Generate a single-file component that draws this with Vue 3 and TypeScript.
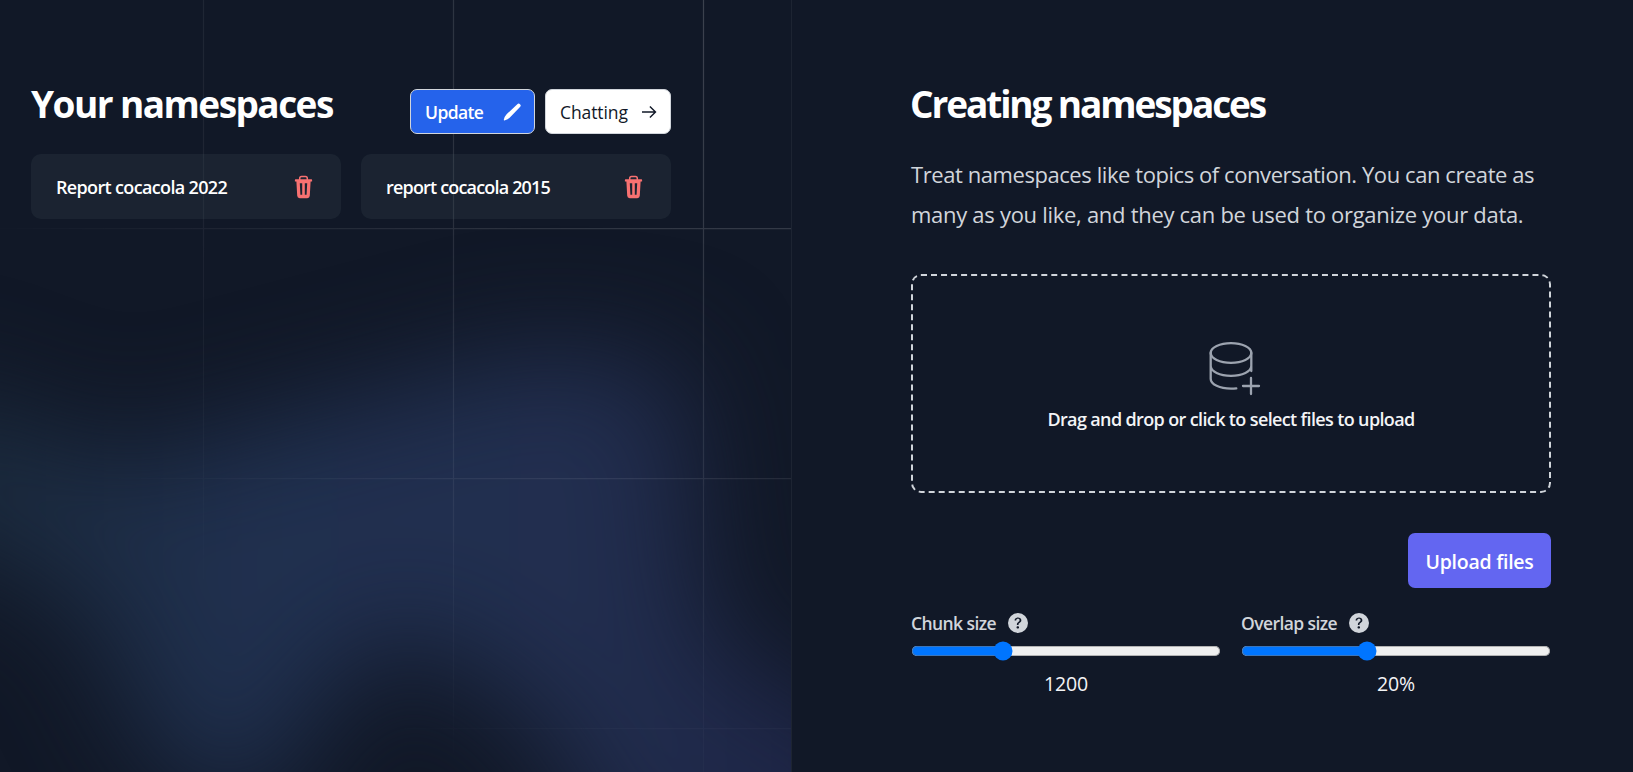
<script setup lang="ts">
import { ref } from 'vue'

interface Namespace {
  name: string
  tight: boolean
}

const namespaces = ref<Namespace[]>([
  { name: 'Report cocacola 2022', tight: false },
  { name: 'report cocacola 2015', tight: true },
])
const chunkSize = ref(1200)
const overlap = ref(20)
</script>

<template>
  <main class="page">
    <section class="left">
      <div class="backdrop">
        <svg class="glow" viewBox="0 0 791 772" preserveAspectRatio="none">
          <defs>
            <filter id="soft" x="-60%" y="-60%" width="220%" height="220%" color-interpolation-filters="sRGB">
              <feGaussianBlur stdDeviation="55" />
            </filter>
            <linearGradient id="tint" x1="0" y1="0" x2="1" y2="0">
              <stop offset="0" stop-color="#1a2a3a" />
              <stop offset="0.35" stop-color="#20304f" />
              <stop offset="0.7" stop-color="#222e4f" />
              <stop offset="1" stop-color="#1c2142" />
            </linearGradient>
          </defs>
          <path
            d="M-100 380 L120 460 L540 350 L680 370 L710 640 L900 740 L900 920 L620 880 L540 720 L400 630 L320 700 L250 820 L160 760 L80 600 L-100 520 Z"
            fill="url(#tint)" filter="url(#soft)" />
        </svg>
        <svg class="grid-lines" width="791" height="772" viewBox="0 0 791 772">
          <defs>
            <radialGradient id="fade" gradientUnits="userSpaceOnUse" cx="791" cy="0" r="850">
              <stop offset="0" stop-color="#fff" />
              <stop offset="1" stop-color="#fff" stop-opacity="0" />
            </radialGradient>
            <mask id="fadeMask"><rect width="791" height="772" fill="url(#fade)" /></mask>
          </defs>
          <path mask="url(#fadeMask)" d="M203.5 0V772M453.5 0V772M703.5 0V772M0 228.5H791M0 478.5H791M0 728.5H791"
            fill="none" stroke="#fff" stroke-opacity="0.2" stroke-width="1.25" />
        </svg>
      </div>
      <div class="left-content">
        <header class="left-head">
          <h2 class="title title-left">Your namespaces</h2>
          <div class="actions">
            <button class="btn btn-update" type="button">
              <span>Update</span>
              <svg width="20" height="20" viewBox="0 0 20 20" fill="currentColor">
                <path d="M18 2.200a1.900 1.900 0 0 0-2.700 0L4.600 12.300Q2.600 14.300 1.800 17.800q-.1.700.6.600Q6 17.500 7.900 15.500L18 5a1.900 1.900 0 0 0 0-2.800z" />
              </svg>
            </button>
            <button class="btn btn-chat" type="button">
              <span>Chatting</span>
              <svg width="16" height="16" viewBox="0 0 16 16" fill="none" stroke="currentColor" stroke-width="1.4">
                <path d="M1 8H14.3M8.9 2.4L14.5 8l-5.6 5.6" />
              </svg>
            </button>
          </div>
        </header>
        <ul class="cards">
          <li v-for="item in namespaces" :key="item.name" class="card" :class="{ tight: item.tight }">
            <span>{{ item.name }}</span>
            <svg width="24" height="24" viewBox="0 0 24 24" fill="none">
              <path d="M7.700 5V3.400Q7.700 1.400 9.500 1.400h4Q15.300 1.400 15.300 3.400V5" stroke="#f87171" stroke-width="1.5" />
              <path fill="#f87171" fill-rule="evenodd"
                d="M3.500 4.300h16a.6.6 0 0 1 .6.6v1.500h-1.500l-.8 14.400a2.600 2.600 0 0 1-2.500 2.400H7.700a2.600 2.600 0 0 1-2.500-2.400L4.400 6.400H2.900V4.900a.6.6 0 0 1 .6-.6zM7.800 8.300l.6 11.500h1.800V8.300zM12.800 8.300v11.500h1.800l.6-11.500z" />
            </svg>
          </li>
        </ul>
      </div>
    </section>

    <section class="right">
      <h2 class="title title-right">Creating namespaces</h2>
      <p class="intro">
        <span class="l1">Treat namespaces like topics of conversation. You can create as</span><br />
        <span class="l2">many as you like, and they can be used to organize your data.</span>
      </p>
      <div class="dropzone">
        <svg width="60" height="60" viewBox="0 0 60 60" fill="none" stroke="#9ca3af" stroke-width="2.3" stroke-linecap="round" stroke-linejoin="round">
          <ellipse cx="30" cy="17" rx="20.3" ry="9.8" />
          <path d="M9.700 17v26c0 5.400 9 9.600 20.300 9.600q3 0 5.300-.3M50.300 17v18M9.700 30c0 5.400 9 9.800 20.300 9.800s20.300-4.400 20.300-9.800M50 42v16M42 50h16" />
        </svg>
        <p>Drag and drop or click to select files to upload</p>
      </div>
      <div class="upload-row">
        <button class="upload" type="button">Upload files</button>
      </div>
      <div class="sliders">
        <div class="slider">
          <div class="label">
            <span>Chunk size</span>
            <svg width="20" height="20" viewBox="0 0 16 16" fill="#d1d5db">
              <path d="M16 8A8 8 0 1 1 0 8a8 8 0 0 1 16 0zM5.496 6.033h.825c.138 0 .248-.113.266-.25.09-.656.54-1.134 1.342-1.134.686 0 1.314.343 1.314 1.168 0 .635-.374.927-.965 1.371-.673.489-1.206 1.06-1.168 1.987l.003.217a.25.25 0 0 0 .25.246h.811a.25.25 0 0 0 .25-.25v-.105c0-.718.273-.927 1.01-1.486.609-.463 1.244-.977 1.244-2.056 0-1.511-1.276-2.241-2.673-2.241-1.267 0-2.655.59-2.75 2.286a.237.237 0 0 0 .241.247zm2.325 6.443c.61 0 1.029-.394 1.029-.927 0-.552-.42-.94-1.029-.94-.584 0-1.009.388-1.009.94 0 .533.425.927 1.01.927z" />
            </svg>
          </div>
          <input v-model.number="chunkSize" type="range" min="100" max="4000" step="100" />
          <div class="value">{{ chunkSize }}</div>
        </div>
        <div class="slider">
          <div class="label">
            <span>Overlap size</span>
            <svg width="20" height="20" viewBox="0 0 16 16" fill="#d1d5db">
              <path d="M16 8A8 8 0 1 1 0 8a8 8 0 0 1 16 0zM5.496 6.033h.825c.138 0 .248-.113.266-.25.09-.656.54-1.134 1.342-1.134.686 0 1.314.343 1.314 1.168 0 .635-.374.927-.965 1.371-.673.489-1.206 1.06-1.168 1.987l.003.217a.25.25 0 0 0 .25.246h.811a.25.25 0 0 0 .25-.25v-.105c0-.718.273-.927 1.01-1.486.609-.463 1.244-.977 1.244-2.056 0-1.511-1.276-2.241-2.673-2.241-1.267 0-2.655.59-2.75 2.286a.237.237 0 0 0 .241.247zm2.325 6.443c.61 0 1.029-.394 1.029-.927 0-.552-.42-.94-1.029-.94-.584 0-1.009.388-1.009.94 0 .533.425.927 1.01.927z" />
            </svg>
          </div>
          <input v-model.number="overlap" type="range" min="0" max="50" />
          <div class="value">{{ overlap }}%</div>
        </div>
      </div>
    </section>
  </main>
</template>

<style>
body {
  margin: 0;
  background: #111827;
}
</style>

<style scoped>
* {
  box-sizing: border-box;
}
.page {
  display: grid;
  grid-template-columns: 792px 1fr;
  height: 772px;
  overflow: hidden;
  background: #111827;
  color: #fff;
  font-family: 'Open Sans', 'Noto Sans', sans-serif;
}
h2,
p,
ul {
  margin: 0;
  padding: 0;
}
svg {
  display: block;
  flex: none;
}
button {
  font-family: inherit;
}
.left {
  position: relative;
  border-right: 1px solid #1d2432;
  overflow: hidden;
}
.backdrop,
.glow,
.grid-lines {
  position: absolute;
  inset: 0;
}
.glow {
  width: 100%;
  height: 100%;
}
.left-content {
  position: relative;
  padding: 79px 120px 0 31px;
}
.left-head {
  display: flex;
  justify-content: space-between;
  height: 75px;
}
.title {
  font-size: 37px;
  font-weight: 700;
  line-height: 50px;
  white-space: nowrap;
}
.title-left {
  letter-spacing: -1.55px;
}
.title-right {
  margin-left: -1px;
  letter-spacing: -2.1px;
}
.actions {
  display: flex;
  gap: 10px;
  padding-top: 10px;
}
.btn {
  display: flex;
  align-items: center;
  justify-content: space-between;
  height: 45px;
  padding: 0 14px;
  border: 1px solid #d1d5db;
  border-radius: 7px;
  font-size: 17.5px;
  white-space: nowrap;
}
.btn-update {
  width: 125px;
  padding-right: 12px;
  background: #2563eb;
  color: #fff;
  font-weight: 600;
  letter-spacing: -0.6px;
}
.btn-chat {
  width: 126px;
  padding-right: 13px;
  background: #fff;
  color: #111827;
  letter-spacing: -0.1px;
}
.cards {
  display: grid;
  grid-template-columns: 1fr 1fr;
  gap: 20px;
  list-style: none;
}
.card {
  display: flex;
  align-items: center;
  justify-content: space-between;
  height: 65px;
  padding: 0 25px;
  border-radius: 10px;
  background: rgba(75, 95, 98, 0.17);
  font-size: 18px;
  font-weight: 600;
  letter-spacing: -0.65px;
}
.card.tight {
  letter-spacing: -0.82px;
}
.right {
  width: 640px;
  margin-left: 119px;
  padding-top: 79px;
}
.intro {
  margin-top: 25px;
  color: #d1d5db;
  font-size: 22px;
  line-height: 40px;
  white-space: nowrap;
}
.l1 {
  letter-spacing: -0.43px;
}
.l2 {
  letter-spacing: -0.29px;
}
.dropzone {
  display: flex;
  flex-direction: column;
  align-items: center;
  height: 219px;
  margin-top: 40px;
  padding-top: 60px;
  border: 2px dashed #d1d5db;
  border-radius: 10px;
  color: #f3f4f6;
  font-size: 18px;
  font-weight: 600;
  line-height: 30px;
  letter-spacing: -0.63px;
}
.dropzone p {
  margin-top: 8px;
}
.upload-row {
  display: flex;
  justify-content: flex-end;
  margin-top: 40px;
}
.upload {
  width: 143px;
  height: 55px;
  padding: 2px 0 0;
  border: 0;
  border-radius: 7px;
  background: #6366f1;
  color: #fff;
  font-size: 19.5px;
  font-weight: 600;
  letter-spacing: -0.25px;
}
.sliders {
  display: grid;
  grid-template-columns: 1fr 1fr;
  gap: 20px;
  margin-top: 20px;
}
.label {
  display: flex;
  align-items: center;
  gap: 12px;
  height: 30px;
  color: #d1d5db;
  font-size: 17.5px;
  font-weight: 600;
  letter-spacing: -0.58px;
}
input {
  display: block;
  zoom: 1.25;
  width: 248px;
  height: 16px;
  margin: 2px 0 0;
}
.value {
  margin-top: 8px;
  color: #f3f4f6;
  font-size: 19.5px;
  line-height: 30px;
  letter-spacing: -0.2px;
  text-align: center;
}
</style>
